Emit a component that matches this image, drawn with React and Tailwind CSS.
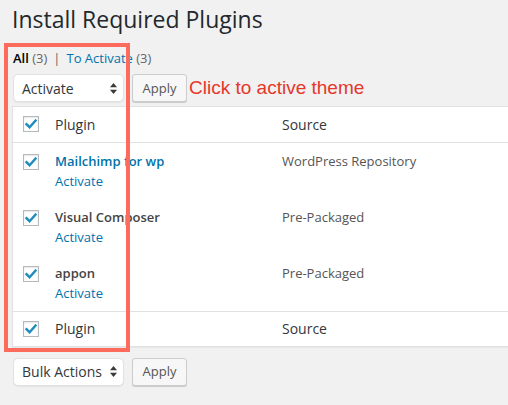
import React from 'react'

const rows = [
  { name: 'Mailchimp for wp', link: true, source: 'WordPress Repository' },
  { name: 'Visual Composer', link: false, source: 'Pre-Packaged' },
  { name: 'appon', link: false, source: 'Pre-Packaged' },
]

function Checkbox() {
  return (
    <span className="w-4 h-4 flex items-center justify-center bg-white border border-[#b4b9be] shadow-[inset_0_1px_2px_rgba(0,0,0,0.1)]">
      <svg width="12" height="10" viewBox="0 0 12 10">
        <path d="M1.5 5.2 L4.6 8.2 L10.5 1.6" fill="none" stroke="#1e8cbe" strokeWidth="2.4" strokeLinecap="square" />
      </svg>
    </span>
  )
}

function Select({ label }) {
  return (
    <div className="w-[111px] h-[28px] flex items-center justify-between pl-2 pr-[6px] bg-white border border-[#e2e2e2] rounded-[5px] shadow-[0_1px_1px_rgba(0,0,0,0.06)] text-[14px] text-[#32373c]">
      <span>{label}</span>
      <svg width="7" height="11" viewBox="0 0 7 11">
        <path d="M3.5 0 L7 4.2 L0 4.2 Z" fill="#3a3a3a" />
        <path d="M3.5 11 L7 6.8 L0 6.8 Z" fill="#3a3a3a" />
      </svg>
    </div>
  )
}

function ApplyButton() {
  return (
    <button className="ml-2 w-[55px] h-[28px] bg-[#f7f7f7] border border-[#cccccc] rounded-[3px] shadow-[0_1px_0_#cccccc] text-[13px] text-[#555555]">
      Apply
    </button>
  )
}

export default function App() {
  return (
    <div className="relative w-[508px] h-[405px] overflow-hidden bg-[#f1f1f1] font-['Open_Sans',sans-serif]">
      <h1 className="pl-3 text-[23px] leading-[38px] text-[#23282d]">Install Required Plugins</h1>

      <div className="mt-[11px] pl-[13px] text-[13px] leading-[18px] text-[#666666]">
        <span className="font-semibold text-black">All</span> <span>(3)</span>
        <span className="mx-[6px]">|</span>
        <span className="text-[#0073aa]">To Activate</span> <span>(3)</span>
      </div>

      <div className="mt-[7px] pl-[13px] flex items-center">
        <Select label="Activate" />
        <ApplyButton />
        <span className="ml-[2px] font-['Liberation_Sans',Arial,sans-serif] text-[19px] text-[#e5372a]">Click to active theme</span>
      </div>

      {/* Table */}
      <div className="mt-[3px] ml-3 w-[520px] bg-white border border-[#e1e1e1] shadow-[0_1px_1px_rgba(0,0,0,0.04)]">
        <div className="h-[36px] flex items-center border-b border-[#e1e1e1] text-[14px] text-[#32373c]">
          <div className="w-8 pl-[10px]"><Checkbox /></div>
          <div className="w-[227px] pl-[10px] leading-[21px]">Plugin</div>
          <div className="pl-[10px] leading-[21px]">Source</div>
        </div>

        {rows.map(r => (
          <div key={r.name} className="h-[56px] flex text-[13px]">
            <div className="w-8 pl-[10px] pt-[11px]"><Checkbox /></div>
            <div className="w-[227px] pl-[10px] pt-2">
              <div className={`leading-[21px] font-semibold ${r.link ? 'text-[#0073aa]' : 'text-[#444444]'}`}>{r.name}</div>
              <div className="leading-[19px] text-[#0073aa]">Activate</div>
            </div>
            <div className="pl-[10px] pt-2 leading-[21px] text-[#555555]">{r.source}</div>
          </div>
        ))}

        <div className="h-[35px] flex items-center border-t border-[#e1e1e1] text-[14px] text-[#32373c]">
          <div className="w-8 pl-[10px]"><Checkbox /></div>
          <div className="w-[227px] pl-[10px] leading-[21px]">Plugin</div>
          <div className="pl-[10px] leading-[21px]">Source</div>
        </div>
      </div>

      <div className="mt-[11px] pl-[13px] flex items-center">
        <Select label="Bulk Actions" />
        <ApplyButton />
      </div>

      {/* annotation box */}
      <div className="absolute left-1 top-[43px] w-[126px] h-[309px] border-4 border-[#fc6b5c]" />
    </div>
  )
}
